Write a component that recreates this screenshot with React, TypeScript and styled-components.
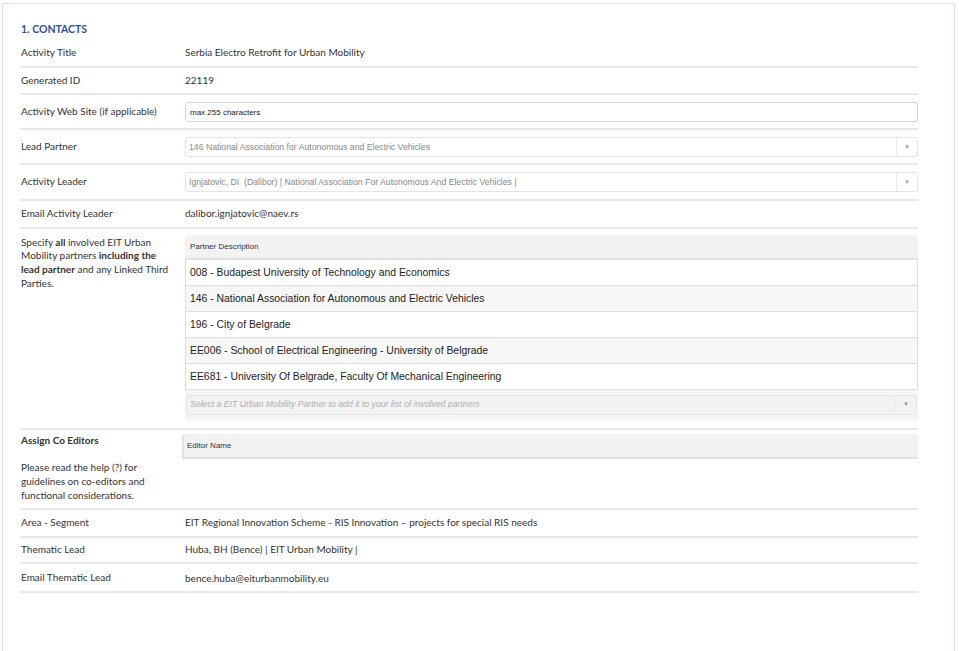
import React from "react";
import styled, { createGlobalStyle } from "styled-components";

const Global = createGlobalStyle`
  html, body { margin: 0; padding: 0; background: #ffffff; }
  body { font-family: Lato, "Open Sans", sans-serif; color: #333; }
`;

const Frame = styled.div`
  margin: 3px 4px 0 2px;
  height: 660px;
  border: 1px solid #dce1ea;
  border-bottom: none;
  box-sizing: border-box;
  padding: 18px 36px 0 17px;
`;

const Title = styled.h2`
  margin: 0 0 0 1px;
  font-size: 10.5px;
  font-weight: 700;
  color: #2f4f9f;
  line-height: 14px;
  height: 17px;
`;

const Row = styled.div<{ $pad?: string; $align?: string }>`
  display: flex;
  align-items: ${(p) => p.$align || "center"};
  padding: ${(p) => p.$pad || "6px 0"};
  border-bottom: 2px solid #e9e9e9;
`;

const Label = styled.div<{ $top?: number }>`
  width: 165px;
  flex: none;
  padding: ${(p) => p.$top || 0}px 14px 0 1px;
  box-sizing: border-box;
  font-size: 10px;
  line-height: 13.6px;
  color: #333;
`;

const Strong = styled.strong`
  font-weight: 700;
`;

const Value = styled.div`
  flex: 1;
  font-size: 10px;
  line-height: 13px;
  color: #333;
  min-width: 0;
`;

const TextInput = styled.div`
  height: 20px;
  border: 1px solid #d6d6d6;
  border-radius: 3px;
  box-sizing: border-box;
  display: flex;
  align-items: center;
  padding-left: 4px;
  font-family: "Liberation Sans", Arial, sans-serif;
  font-size: 8px;
  color: #222;
`;

const Select = styled.div<{ $bg?: string; $italic?: boolean }>`
  height: 20px;
  border: 1px solid #e4e4e4;
  border-radius: 3px;
  box-sizing: border-box;
  display: flex;
  align-items: stretch;
  background: ${(p) => p.$bg || "#fff"};
  font-family: "Liberation Sans", Arial, sans-serif;
  font-size: 8.7px;
  color: ${(p) => (p.$italic ? "#b0b0b0" : "#888")};
  font-style: ${(p) => (p.$italic ? "italic" : "normal")};
`;

const SelectText = styled.div`
  flex: 1;
  display: flex;
  align-items: center;
  padding-left: 3px;
  white-space: nowrap;
  overflow: hidden;
`;

const Arrow = styled.div`
  width: 20px;
  border-left: 1px solid #ececec;
  display: flex;
  align-items: center;
  justify-content: center;
  color: #999;
  font-size: 6px;
  font-style: normal;
`;

const Table = styled.div`
  border-radius: 3px;
  overflow: hidden;
`;

const Header = styled.div<{ $shadow?: boolean }>`
  height: 25px;
  background: #f2f2f2;
  border-radius: 3px 3px 0 0;
  box-sizing: border-box;
  display: flex;
  align-items: center;
  padding-left: 5px;
  font-family: "Liberation Sans", Arial, sans-serif;
  font-size: 8px;
  color: #333;
  border-bottom: 2px solid #e2e2e2;
  margin-left: ${(p) => (p.$shadow ? "-3px" : "0")};
  box-shadow: ${(p) => (p.$shadow ? "inset 2px 0 0 #e2e2e2" : "none")};
`;

const PartnerRow = styled.div<{ $alt: boolean }>`
  height: 26px;
  box-sizing: border-box;
  display: flex;
  align-items: center;
  padding-left: 4px;
  background: ${(p) => (p.$alt ? "#f7f7f7" : "#fff")};
  border: 1px solid #dedede;
  border-top: none;
  font-family: "Liberation Sans", Arial, sans-serif;
  font-size: 10.4px;
  color: #222;
`;

const Footer = styled.div`
  background: #f6f6f6;
  padding: 5px 1px 6px 1px;
`;

const LabelBlock = styled.div`
  margin-bottom: 14px;
  font-weight: 700;
`;

const partners = [
  "008 - Budapest University of Technology and Economics",
  "146 - National Association for Autonomous and Electric Vehicles",
  "196 - City of Belgrade",
  "EE006 - School of Electrical Engineering - University of Belgrade",
  "EE681 - University Of Belgrade, Faculty Of Mechanical Engineering",
];

export default function App() {
  return (
    <>
      <Global />
      <Frame>
        <Title>1. CONTACTS</Title>
        <Row $pad="7px 0 6px">
          <Label>Activity Title</Label>
          <Value>Serbia Electro Retrofit for Urban Mobility</Value>
        </Row>
        <Row $pad="6px 0 6px">
          <Label>Generated ID</Label>
          <Value>22119</Value>
        </Row>
        <Row $pad="7px 0 6px">
          <Label>Activity Web Site (if applicable)</Label>
          <Value>
            <TextInput>max 255 characters</TextInput>
          </Value>
        </Row>
        <Row $pad="7px 0 6px">
          <Label>Lead Partner</Label>
          <Value>
            <Select>
              <SelectText>146 National Association for Autonomous and Electric Vehicles</SelectText>
              <Arrow>▼</Arrow>
            </Select>
          </Value>
        </Row>
        <Row $pad="7px 0 7px">
          <Label>Activity Leader</Label>
          <Value>
            <Select>
              <SelectText>
                Ignjatovic, DI&nbsp; (Dalibor) | National Association For Autonomous And Electric Vehicles |
              </SelectText>
              <Arrow>▼</Arrow>
            </Select>
          </Value>
        </Row>
        <Row $pad="6px 0 6px">
          <Label>Email Activity Leader</Label>
          <Value>dalibor.ignjatovic@naev.rs</Value>
        </Row>
        <Row $pad="6px 0 7px" $align="flex-start">
          <Label $top={1}>
            Specify <Strong>all</Strong> involved EIT Urban Mobility partners <Strong>including the lead partner</Strong> and
            any Linked Third Parties.
          </Label>
          <Value>
            <Table>
              <Header>Partner Description</Header>
              {partners.map((p, i) => (
                <PartnerRow key={p} $alt={i % 2 === 1}>
                  {p}
                </PartnerRow>
              ))}
              <Footer>
                <Select $bg="#f2f2f2" $italic>
                  <SelectText>Select a EIT Urban Mobility Partner to add it to your list of involved partners</SelectText>
                  <Arrow>▼</Arrow>
                </Select>
              </Footer>
            </Table>
          </Value>
        </Row>
        <Row $pad="4px 0 6px" $align="flex-start">
          <Label>
            <LabelBlock>Assign Co Editors</LabelBlock>
            Please read the help (?) for guidelines on co-editors and functional considerations.
          </Label>
          <Value>
            <Header $shadow>Editor Name</Header>
          </Value>
        </Row>
        <Row>
          <Label>Area - Segment</Label>
          <Value>EIT Regional Innovation Scheme - RIS Innovation – projects for special RIS needs</Value>
        </Row>
        <Row $pad="5px 0 6px">
          <Label>Thematic Lead</Label>
          <Value>Huba, BH (Bence) | EIT Urban Mobility |</Value>
        </Row>
        <Row $pad="7px 0 6px">
          <Label>Email Thematic Lead</Label>
          <Value>bence.huba@eiturbanmobility.eu</Value>
        </Row>
      </Frame>
    </>
  );
}
